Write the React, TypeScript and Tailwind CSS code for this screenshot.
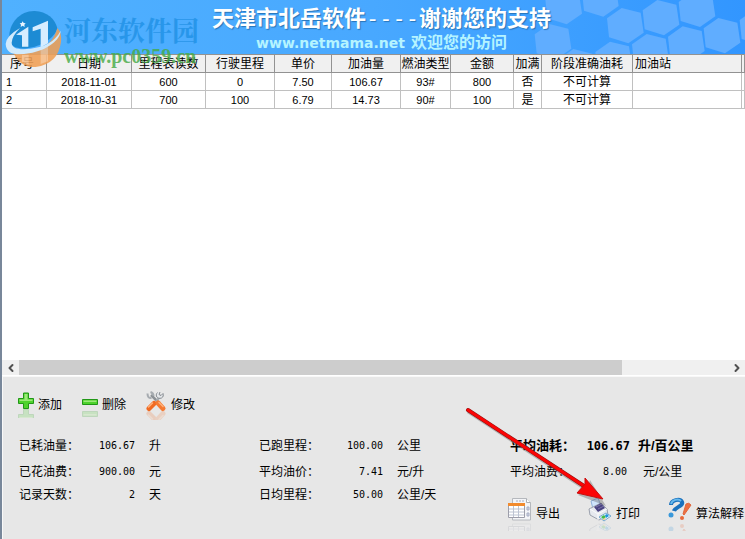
import type { ReactNode } from 'react'
import { ChevronLeft, ChevronRight } from 'lucide-react'

const columns = [
  { title: '序号', className: 'w-[45px] pl-2 text-left' },
  { title: '日期', className: 'w-[85px]' },
  { title: '里程表读数', className: 'w-[74px]' },
  { title: '行驶里程', className: 'w-[69px]' },
  { title: '单价', className: 'w-[57px]' },
  { title: '加油量', className: 'w-[69px]' },
  { title: '燃油类型', className: 'w-[50px]' },
  { title: '金额', className: 'w-[63px]' },
  { title: '加满', className: 'w-[28px]' },
  { title: '阶段准确油耗', className: 'w-[91px]' },
  { title: '加油站', className: 'w-[109px] pl-0.5 text-left' },
  { title: '', className: '' },
]

const records = [
  ['1', '2018-11-01', '600', '0', '7.50', '106.67', '93#', '800', '否', '不可计算', '', ''],
  ['2', '2018-10-31', '700', '100', '6.79', '14.73', '90#', '100', '是', '不可计算', '', ''],
]

const hexagons = [
  [190, 20], [300, -3], [375, 77], [482, 53], [590, 28], [665, 107],
  [558, 132], [450, 155], [158, 125], [340, 178], [230, 200], [773, 82],
]

function Reflected({ width, height, children }: { width: number; height: number; children: ReactNode }) {
  return (
    <svg width={width} height={height + 9} viewBox={`0 0 ${width} ${height + 9}`} aria-hidden="true">
      {children}
      <g transform={`translate(0 ${height * 2}) scale(1 -1)`} opacity="0.2">
        {children}
      </g>
    </svg>
  )
}

function AddIcon() {
  return (
    <Reflected width={16} height={17}>
      <path d="M5.5 1h5v5.500h5v5h-5v5h-5v-5h-5v-5h5z" fill="#4ed32d" stroke="#219716" />
      <path d="M6.500 2h3v5.500h5v1.500h-13v-1.500h5z" fill="#9be979" />
    </Reflected>
  )
}

function RemoveIcon() {
  return (
    <Reflected width={16} height={15}>
      <path d="M.5 6.500h15v5h-15z" fill="#4ed32d" stroke="#219716" />
      <path d="M1.500 7.500h13v1.500h-13z" fill="#9be979" />
    </Reflected>
  )
}

function EditIcon() {
  return (
    <Reflected width={21} height={20}>
      <path d="M5 4l7 7" stroke="#8d9297" strokeWidth="2.500" />
      <path d="M1.500 2.500q0 5 4 4.500M4.500 1q3 1 3 4M15 4.500l-5 6" stroke="#a6abb0" strokeWidth="2" fill="none" />
      <path d="M11.500 1.500c-3 3 0 7 4 5.500 2-1 2-3 1.500-4.500l-2 2-2-1 1-2.500" fill="#e5e8eb" stroke="#858a90" />
      <path d="M3 17.500l5-5" stroke="#f06a22" strokeWidth="5" strokeLinecap="round" />
      <path d="M12 12l5 5.500" stroke="#f57a32" strokeWidth="5" strokeLinecap="round" />
      <path d="M2.500 16l4-4M13 11.500l4 4" stroke="#ffb27c" strokeWidth="1.500" strokeLinecap="round" />
    </Reflected>
  )
}

function ExportIcon() {
  return (
    <Reflected width={24} height={25}>
      <path d="M4.500 1.500h14l4 4v17.500h-18z" fill="#f4f5f8" stroke="#b5b8bd" />
      <path d="M18.500 1.500v4h4" fill="#fff" stroke="#adb0b5" />
      <path d="M8 4h2m1 0h2m1 0h2M19 10h2v3h-2zM19 16h2v3h-2z" stroke="#a7aec4" fill="#d4d9e8" />
      <path d="M.5 6.500h16v14h-16z" fill="#fff" stroke="#9d9eaa" />
      <path d="M0 6h17v3H0z" fill="#f28b2e" />
      <path d="M1 12h15M1 15h15M1 18h15M5.500 9v11M10.500 9v11" stroke="#bdc4d2" />
    </Reflected>
  )
}

function PrintIcon() {
  return (
    <Reflected width={24} height={25}>
      <path d="M3 4l7-3 3 8-8 3z" fill="#cfe4fc" stroke="#90b2dc" />
      <path d="M1 12l12-6 6 6 1 6-9 5-9-5z" fill="#e6e9ef" stroke="#9ba1ad" />
      <path d="M2 12l8 5 9-5M10 17v6" stroke="#fafbfc" fill="none" />
      <path d="M6 10l7-4 4 5-7 4z" fill="#4a4382" />
      <path d="M8 10l6-3M10 12l6-3" stroke="#7973a8" />
      <path d="M11 20l7-4 5 3-7 5z" fill="#eef9ff" stroke="#75a9cf" />
      <path d="M13 20l3-2 2 2-3 2z" fill="#45b949" />
      <path d="M17 18l2-1 2 2-3 2z" fill="#1e94dc" />
      <path d="M15 22l3-1-2 2z" fill="#f2a72f" />
    </Reflected>
  )
}

function HelpIcon() {
  return (
    <Reflected width={24} height={25}>
      <path d="M3 8C3 3 12 1 14 5s-7 5-8 9" fill="none" stroke="#1971bd" strokeWidth="4" />
      <path d="M3 7C4 3 10 1 13 4" fill="none" stroke="#67b9ed" strokeWidth="2" />
      <circle cx="3" cy="18" r="2.500" fill="#3998da" />
      <path d="M18 7q3-2 5 1l-7 10-1-1z" fill="#ed7042" stroke="#e0673c" />
      <circle cx="14" cy="21" r="2" fill="#e86839" />
    </Reflected>
  )
}

function SiteBadge() {
  return (
    <svg width="62" height="62" viewBox="6 21 186 186" aria-hidden="true">
      <g opacity="0.88">
        <path d="M28 118C24 68 62 32 104 33c36 1 62 24 68 52-8 30-50 55-90 60-34 3-50-6-54-27z" fill="#1786cf" />
        <path d="M40 158C100 168 158 142 172 84q14 14 11 42-9 66-76 75-46 2-67-43z" fill="#f0a055" />
        <path d="M122 146l22-12v50l-22 8zM66 164h20v30l-20-9z" fill="#f7bd88" />
        <path d="M60 84Q18 108 17 132c2 34 36 34 70 28 58-10 94-42 95-68-18 34-48 48-90 54-34 4-57 0-57-18q1-20 25-44z" fill="#e3f2fc" />
        <path d="M48 104l37-24v60H66v-34zM98 82l46-20v68l-22 12V86l-24 8z" fill="#eaf6ff" />
        <path d="M68 64l3 5 6 1-4 4 1 7-6-4-6 4 1-7-4-4 6-1z" fill="#fff" />
      </g>
    </svg>
  )
}

function Banner() {
  return (
    <header className="relative h-[54px] overflow-hidden bg-linear-to-r from-[#50b1ff] via-[#48a8ff] to-[#3296ff]">
      <svg className="absolute top-0 right-0" width="245" height="54" viewBox="0 0 735 162" aria-hidden="true">
        {hexagons.map(([x, y]) => (
          <path key={x} d="M-10-53l57 14 9 60-46 32-58-18-6-57z" transform={`translate(${x} ${y})`} fill="#60adff" />
        ))}
      </svg>
      <div className="relative flex flex-col items-center pt-[5px] pl-4 font-bold">
        <h1 className="font-['DejaVu_Sans_Mono','Noto_Sans_CJK_SC',monospace] text-[22px] leading-7 whitespace-nowrap text-white [text-shadow:1px_1px_1px_#2874b8]">
          天津市北岳软件<span className="font-normal">----</span>谢谢您的支持
        </h1>
        <p className="flex items-center gap-1.5 font-['DejaVu_Sans','Noto_Sans_CJK_SC',sans-serif] text-sm leading-5 whitespace-nowrap text-[#b5f4ff]">
          <span>www.netmama.net</span>
          <span className="text-base leading-5">欢迎您的访问</span>
        </p>
      </div>
    </header>
  )
}

function RecordTable() {
  return (
    <table className="w-full table-fixed border-separate border-spacing-0 text-center leading-4 whitespace-nowrap">
      <thead>
        <tr className="h-[19px] bg-[#f0f0f0]">
          {columns.map((column, i) => (
            <th key={i} className={`overflow-hidden border-t border-r border-b border-[#929292] p-0 font-normal ${column.className}`}>
              {column.title}
            </th>
          ))}
        </tr>
      </thead>
      <tbody>
        {records.map((record) => (
          <tr key={record[0]} className="h-[18px]">
            {record.map((value, i) => (
              <td key={i} className={`overflow-hidden border-r border-b border-[#c0c0c0] p-0 leading-4 ${i === 0 ? 'pl-1 text-left' : ''} ${i > 7 ? 'text-xs leading-4' : 'text-[11px]'}`}>
                {value}
              </td>
            ))}
          </tr>
        ))}
      </tbody>
    </table>
  )
}

function Stat({ label, value, unit, width, bold }: { label: string; value: string; unit: string; width: string; bold?: boolean }) {
  return (
    <div className={`flex h-[26px] items-center whitespace-nowrap last:h-5 ${bold ? 'text-[13px] font-bold' : ''}`}>
      <dt className="w-16">{label}</dt>
      <dd className={`flex items-center ${bold ? 'gap-2' : 'gap-[14px]'}`}>
        <span className={`text-right font-['DejaVu_Sans_Mono',monospace] ${width} ${bold ? 'text-xs' : 'text-[10px]'}`}>{value}</span>
        <span>{unit}</span>
      </dd>
    </div>
  )
}

function ToolButton({ icon, label }: { icon: ReactNode; label: string }) {
  return (
    <button type="button" className="flex shrink-0 items-center gap-1 whitespace-nowrap">
      {icon}
      {label}
    </button>
  )
}

export default function App() {
  return (
    <div className="relative flex min-h-screen flex-col overflow-hidden border-l-2 border-[#78879a] bg-white font-['Liberation_Sans','Noto_Sans_CJK_SC',sans-serif] text-xs text-black">
      <Banner />

      <main className="flex-1">
        <RecordTable />
      </main>

      {/* Horizontal scrollbar */}
      <div className="flex h-4 items-center border-b border-white bg-[#f0f0f0] text-[#505050]">
        <button type="button" aria-label="向左滚动" className="flex w-[17px] justify-center">
          <ChevronLeft size={12} strokeWidth={4} />
        </button>
        <div className="h-full flex-1">
          <div className="h-full w-[85%] bg-[#cdcdcd]" />
        </div>
        <button type="button" aria-label="向右滚动" className="flex w-[17px] justify-center">
          <ChevronRight size={12} strokeWidth={4} />
        </button>
      </div>

      {/* Toolbar and totals */}
      <section className="relative border-t border-l border-[#f8f8f8] bg-[#e7e7e7] pb-2">
        <div className="flex h-14 items-center gap-5 pl-[15px]">
          <ToolButton icon={<AddIcon />} label="添加" />
          <ToolButton icon={<RemoveIcon />} label="删除" />
          <ToolButton icon={<EditIcon />} label="修改" />
        </div>

        <dl className="grid grid-cols-[240px_251px_1fr] pl-4">
          <div>
            <Stat label="已耗油量：" value="106.67" unit="升" width="w-[52px]" />
            <Stat label="已花油费：" value="900.00" unit="元" width="w-[52px]" />
            <Stat label="记录天数：" value="2" unit="天" width="w-[52px]" />
          </div>
          <div>
            <Stat label="已跑里程：" value="100.00" unit="公里" width="w-[60px]" />
            <Stat label="平均油价：" value="7.41" unit="元/升" width="w-[60px]" />
            <Stat label="日均里程：" value="50.00" unit="公里/天" width="w-[60px]" />
          </div>
          <div>
            <Stat label="平均油耗：" value="106.67" unit="升/百公里" width="w-[56px]" bold />
            <div className="flex h-[26px] items-center whitespace-nowrap">
              <dt className="w-16">平均油费：</dt>
              <dd className="flex items-center gap-4">
                <span className="w-[53px] text-right font-['DejaVu_Sans_Mono',monospace] text-[10px]">8.00</span>
                <span>元/公里</span>
              </dd>
            </div>
          </div>
        </dl>

        <div className="-mt-2 flex items-center justify-end gap-7 pr-px">
          <ToolButton icon={<ExportIcon />} label="导出" />
          <ToolButton icon={<PrintIcon />} label="打印" />
          <ToolButton icon={<HelpIcon />} label="算法解释" />
        </div>

        {/* Pointer to the print button */}
        <svg className="pointer-events-none absolute top-7 left-[460px]" width="150" height="104" viewBox="0 0 150 104" aria-hidden="true">
          <path d="M4 5l117 77-6 5 28 11-16-26-2 7L5 3z" fill="#555" opacity="0.35" transform="translate(0 3)" />
          <path d="M5 5l116 76" stroke="#8f1616" strokeWidth="4" strokeLinecap="round" />
          <path d="M5 5l116 76" stroke="#fb0505" strokeWidth="3" strokeLinecap="round" />
          <path d="M140 94l-18-21v6l-8 9z" fill="#fb0505" stroke="#c80f0f" />
        </svg>
      </section>

      {/* Site watermark */}
      <div className="pointer-events-none absolute top-[7px] left-0 flex items-center">
        <SiteBadge />
        <div className="pt-1 whitespace-nowrap">
          <p className="font-['Noto_Serif_CJK_SC','Noto_Sans_CJK_SC',serif] text-[27px] leading-8 font-bold text-[#1c8fe3] opacity-75">河东软件园</p>
          <p className="font-['Liberation_Serif',serif] text-xl leading-5 font-bold text-[#45ab45] opacity-80">www.pc0359.cn</p>
        </div>
      </div>
    </div>
  )
}
